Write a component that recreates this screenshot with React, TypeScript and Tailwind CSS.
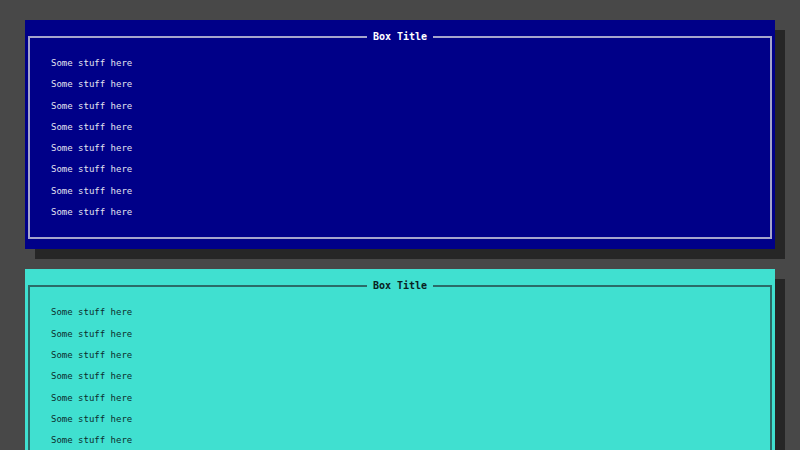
const rows = Array.from({ length: 8 }, () => 'Some stuff here');

type Theme = 'blue' | 'teal';

function Box({ theme }: { theme: Theme }) {
  const blue = theme === 'blue';
  return (
    <div
      className={`px-[3px] pt-[9px] pb-[10px] shadow-[10px_10px_0_#262626] ${
        blue ? 'bg-[#000088] text-[#e4e4f0]' : 'bg-[#40e0d0] text-[#0c2c2c]'
      }`}
    >
      <fieldset
        className={`border-2 px-[21px] pb-[14px] pt-2 ${
          blue ? 'border-[#a4a4cc]' : 'border-[#2b6b68]'
        }`}
      >
        <legend
          className={`mx-auto px-[6px] text-[10px] font-bold leading-[16px] ${
            blue ? 'text-white' : 'text-[#0a2222]'
          }`}
        >
          Box Title
        </legend>
        {rows.map((r, i) => (
          <div key={i} className="text-[9px] leading-[21.3px]">
            {r}
          </div>
        ))}
      </fieldset>
    </div>
  );
}

export default function App() {
  return (
    <div className="min-h-screen bg-[#484848] px-[25px] pt-5 pb-5 font-['DejaVu_Sans_Mono',monospace]">
      <div className="flex flex-col gap-5">
        <Box theme="blue" />
        <Box theme="teal" />
      </div>
    </div>
  );
}
